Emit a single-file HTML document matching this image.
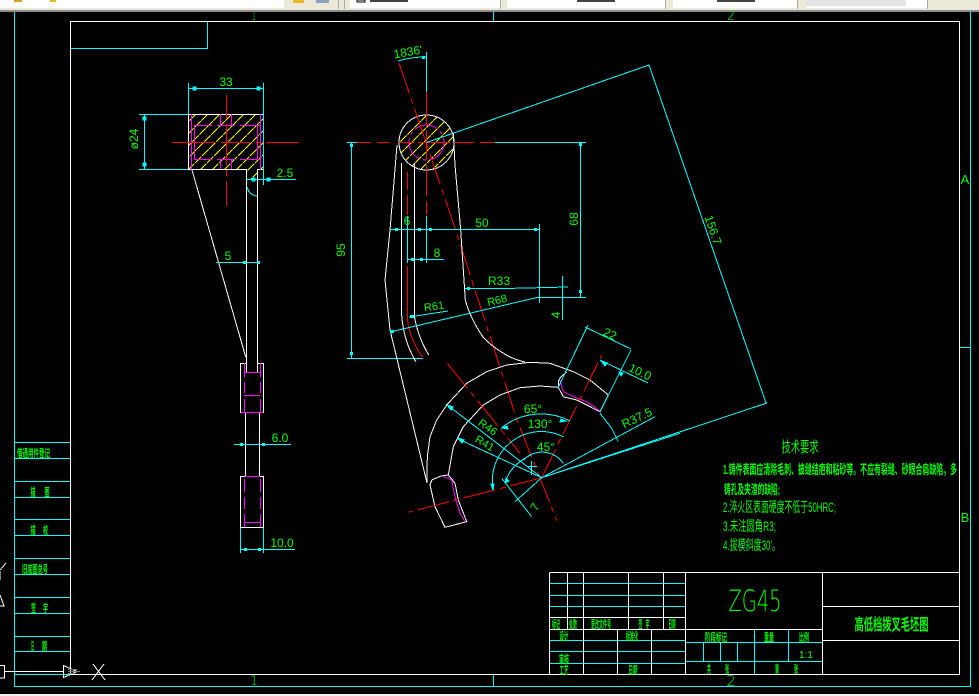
<!DOCTYPE html>
<html><head><meta charset="utf-8"><style>
html,body{margin:0;padding:0;background:#000;width:979px;height:696px;overflow:hidden}
svg{display:block}
.w{stroke:#fff;fill:none}.c{stroke:#0ff;fill:none}.r{stroke:#f00;fill:none}.m{stroke:#f0f;fill:none}
.d{stroke-dasharray:32 5 6 5}
text{fill:#0f0;font-family:"Liberation Sans","WenQuanYi Zen Hei","Noto Sans CJK SC",sans-serif;text-anchor:middle}
.k{font-size:11px;font-weight:bold;font-family:"Liberation Sans","Noto Sans CJK SC",sans-serif}
.n{text-anchor:start;font-size:14px;font-family:"Liberation Sans","Noto Sans CJK SC",sans-serif}
.b{font-weight:bold;font-size:13px}
.t{font-family:"DejaVu Sans",sans-serif;font-weight:200}
</style></head><body>
<svg width="979" height="696" viewBox="0 0 979 696" shape-rendering="crispEdges">
<defs>
<clipPath id="cc"><circle cx="426.5" cy="142.5" r="27"/></clipPath>
<clipPath id="cr"><path d="M189 115H263V169H257V196H247V169H189Z"/></clipPath>
</defs>
<rect width="979" height="696" fill="#000"/>
<!-- toolbar -->
<rect width="979" height="10" fill="#ece9d8"/>
<rect y="10" width="979" height="2" fill="#8c8c8c"/>
<rect width="284" height="8" fill="#fff"/>
<rect x="350" width="150" height="8" fill="#fff"/><rect x="507" width="158" height="8" fill="#fff"/><rect x="673" width="124" height="8" fill="#fff"/><rect x="806" width="122" height="8" fill="#fff"/><rect x="806" width="100" height="6" fill="#e4e4e4"/>
<path d="M338.5 0V9M344.5 0V9M500.5 0V9M665.5 0V9M797.5 0V9M927.5 0V9" stroke="#aaa"/>
<rect x="293" width="11" height="3" fill="#e8b820"/><rect x="316" width="13" height="3" fill="#8aa0c0"/>
<rect x="357" width="8" height="2" fill="#fff" stroke="#000"/><rect x="370" y="0" width="38" height="2" fill="#444"/>
<rect x="577" y="0" width="38" height="2" fill="#444"/><rect x="717" y="0" width="38" height="2" fill="#444"/><rect x="14" y="0" width="8" height="2" fill="#d9a520"/><rect x="50" y="0" width="6" height="2" fill="#e8b820"/>
<!-- bottom strip -->
<rect y="694" width="979" height="2" fill="#f0f0f0"/>
<!-- frames -->
<path class="c" d="M14.5 12V686.5H970.5V12M493.5 12V21M493.5 674V686M959 347.5H970"/>
<path class="w" d="M70.5 21.5H959.5V674.5H70.5Z"/>
<path class="c" d="M71 48.5H207.5V22"/>
<text x="254" y="20" font-size="11" textLength="2" lengthAdjust="spacingAndGlyphs">1</text>
<text x="731" y="20" font-size="13" class="t">2</text>
<text x="254" y="685" font-size="13" class="t">1</text>
<text x="731" y="686" font-size="15" class="t">2</text>
<text x="965" y="184" font-size="13">A</text>
<text x="965" y="522" font-size="13">B</text>
<!-- left table -->
<path class="c" d="M14 442.5H70M14 458.5H70M14 481.5H70M14 497.5H70M14 519.5H70M14 535.5H70M14 558.5H70M14 574.5H70M14 597.5H70M14 613.5H70M14 636.5H70M14 651.5H70M14 674.5H70"/>
<text x="33.5" y="457" textLength="33" lengthAdjust="spacingAndGlyphs" class="k">借通用件登记</text>
<text x="33" y="496" textLength="5" lengthAdjust="spacingAndGlyphs" class="k">描</text><text x="47" y="496" textLength="5" lengthAdjust="spacingAndGlyphs" class="k">图</text>
<text x="33" y="534" textLength="5" lengthAdjust="spacingAndGlyphs" class="k">描</text><text x="45.5" y="534" textLength="5" lengthAdjust="spacingAndGlyphs" class="k">校</text>
<text x="35" y="573" textLength="26" lengthAdjust="spacingAndGlyphs" class="k">旧底图总号</text>
<text x="33.5" y="612" textLength="5" lengthAdjust="spacingAndGlyphs" class="k">签</text><text x="45.5" y="612" textLength="5" lengthAdjust="spacingAndGlyphs" class="k">字</text>
<text x="32.5" y="650" textLength="3" lengthAdjust="spacingAndGlyphs" class="k">日</text><text x="44.5" y="650" textLength="5" lengthAdjust="spacingAndGlyphs" class="k">期</text>
<!-- left stub / UCS -->
<path class="w" d="M0 665.5H4.5V678H0M5 671.5H63M63.5 665.5V677.5L77 671.5Z"/>
<path class="w" d="M70 674.5H120M93 664L105 680M104 664L92 680M0 570L6 563M0 580V571M0 595L4 606H0"/>
<path d="M68 671.5H80M68 669.5H77M68 673.5H75" stroke="#777"/>
<!-- left view section -->
<g clip-path="url(#cr)"><path stroke="#ff0" stroke-dasharray="9 1" fill="none" d="M210 100L130 180M222 100L142 180M234 100L154 180M246 100L166 180M258 100L178 180M270 100L190 180M282 100L202 180M294 100L214 180M306 100L226 180M318 100L238 180M330 100L250 180M342 100L262 180M354 100L258 196"/></g>
<path class="w" d="M188.5 114.5H263.5V169.5H257.5V372M188.5 114.5V169.5H246.5V372"/>
<path class="w" d="M192 170L245.7 357"/>
<path class="m" d="M191.5 114V170M194.5 125V160M260.5 114V170M257.5 125V160M194 125.5H212M217 125.5H235M240 125.5H260M194 159.5H212M217 159.5H235M240 159.5H260M220.5 114V125M231.5 114V125M220.5 160V169M231.5 160V169"/>
<path class="r" d="M172 142.5H214M209 142.5H216M221 142.5H250M256 142.5H263M266 142.5H299M226.5 95V119M226.5 124V165M226.5 170V176M226.5 181V206"/>
<path class="c" d="M188.5 83V114M263.5 83V185M188 88.5H264M139 114.5H188M139 169.5H188M144.5 115V169M246 179.5H296M247 187Q249 195 257 196"/>
<path d="M193 87h3v3h-3zM257 87h3v3h-3zM143 117h3v3h-3zM143 163h3v3h-3zM252 178h3v3h-3zM267 178h3v3h-3z" fill="#0ff" stroke="#0ff"/>
<text x="226" y="86" font-size="12">33</text>
<text x="142" y="143" font-size="12" transform="rotate(-90 138 143)">ø24</text>
<text x="285" y="177" font-size="12">2.5</text>
<path class="c" d="M216 262.5H258"/><path d="M243 261h3v3h-3zM257 261h3v3h-3z" fill="#0ff"/>
<text x="228" y="260" font-size="12">5</text>
<!-- lower shaft -->
<path class="w" d="M246.5 363.5H240.5V412.5H263.5V363.5H257.5M245.5 412V476M259.5 412V476M240.5 476.5H263.5V527.5H240.5Z"/>
<path class="m" d="M244.5 363V377M244.5 382V393M244.5 399V412M260.5 363V377M260.5 382V393M260.5 399V412M244 372.5H260M244 395.5H260M241 412.5H263M245 476.5H260M244.5 479V492M244.5 497V509M244.5 514V527M260.5 479V492M260.5 497V509M260.5 514V527M244 522.5H260"/>
<path class="c" d="M234 444.5H291M240.5 528V553M263.5 528V553M240 549.5H295"/>
<path d="M240 443h3v3h-3zM262 443h3v3h-3zM244 548h3v3h-3zM258 548h3v3h-3z" fill="#0ff"/>
<text x="280" y="442" font-size="12">6.0</text>
<text x="282" y="547" font-size="12">10.0</text>
<!-- circle head -->
<g clip-path="url(#cc)"><path stroke="#ff0" stroke-dasharray="9 1" fill="none" d="M442 100L372 170M454 100L384 170M466 100L396 170M478 100L408 170M490 100L420 170M502 100L432 170M514 100L444 170M526 100L456 170"/></g>
<circle class="w" cx="426.5" cy="142.5" r="27.5"/>
<circle class="m" cx="426.5" cy="142.5" r="17.5" stroke-dasharray="24 4 3 4"/>
<path class="r d" d="M399 63L455 228L517 420L557 521"/>
<path class="r" d="M357 142.5H371M377 142.5H390M399 142.5H414M418 142.5H450M455 142.5H474M480 142.5H495M426.5 92V125M426.5 130V160M426.5 165V196M426.5 201V215"/>
<path class="c" d="M347 142.5H357M495 142.5H586M426.5 52V92M426.5 216V263M351.5 143V358M580.5 143V297M347 358.5H423M537 297.5H586"/>
<path class="c" d="M426.5 142.5L649 65M398 61Q410 57 426 57"/>
<path d="M350 144h3v3h-3zM350 352h3v3h-3zM579 290h3v3h-3zM579 143h3v3h-3zM422 56h3v3h-3z" fill="#0ff"/>
<text x="408" y="56" font-size="12" transform="rotate(-10 408 52)">1836'</text>
<!-- fork -->
<path class="w" d="M397 145L390 230L385 280L390 330L427 483M401.5 163V313Q403 340 416 362M414.5 163V317Q418 337 428.7 355"/>
<path class="w" d="M453.3 133L455 165L460.7 230L465.3 300Q470 318 483 337Q490 345 503 353Q512 359 525 362"/>
<path class="w" d="M427.3 456.7L430 436.7L436.7 420L446.7 405L466.7 383.3L486.7 371.7L506.7 365L530 362.3L550 363.3L573.3 371.7L590 380L608.3 395L600 411.7L576.7 400L563.3 396.7L558.3 387.3L558.3 381.7L560 378L566.7 371.7"/>
<path class="w" d="M427.3 456.7L427 483M448.3 475L453.3 446.7L463.3 426.7L483.3 405L500 395L520 387.7L540 386L558.3 387.3"/>
<path class="w" d="M430 485L431.7 480L441.7 475.7L448.3 475L455 483.3L458.3 500L466.7 521.7L445 527.3L435 506.7Z"/>
<path class="m" d="M560 380L563.3 391.7L573.3 396.7L586.7 401.7L600 411M441.7 475.7L451.7 480L455 496.7L460 513.3L465 521.7"/>
<!-- red lines -->
<path class="r d" d="M541.7 477.7L408.3 512.3M541.7 477.7L601.7 355M447.3 363.3L520 453.3"/>
<path class="r" d="M407.5 172V190M407.5 195V215M407.5 266V320Q410 340 422.7 357"/>
<!-- main dims -->
<path class="c" d="M390 229.5H539M539.5 224V303M407.5 216V263M407 259.5H444M465 288.5H505L568 287M562.5 276V320M390 332L537 297.5M409 317L448 311M448.3 405.7L541.7 477.7M458.3 439L541.7 477.7M655 416.7L541.7 477.7M680 433.3L541.7 477.7M541.7 477.7L767 403M649 65L766 403"/>
<path d="M395 228h3v3h-3zM418 228h3v3h-3zM429 228h3v3h-3zM534 228h3v3h-3zM411 258h3v3h-3zM420 258h3v3h-3zM467 287h3v3h-3zM410 315h4v3h-4zM390 330h4v3h-4z" fill="#0ff"/>
<path class="c" d="M501.7 427.7A63 63 0 0 1 570 421M493.3 490A49 49 0 0 1 563.3 436.7M523.3 460A26 26 0 0 1 563.3 463.3M505 483Q510 465 531 455M515 501.7L541.7 477.7M501.7 478.3L531.7 516.7M527 466.5H537M531.5 461V475M600 413.3L611.7 428.3L618.3 441.7"/>
<path class="c" d="M558 388L588 325M600 412L631 350M585 327L631 349M600 360L648 383"/>
<path d="M601 361l6 2-2 3zM619 372l4 1-2 3zM447 405l6 2-2 3zM458 438l6 2-2 3zM502 428l5-2 1 3zM566 421l-5-2-1 3zM493 490l-2-6 3 0zM505 483l1-5 3 3z" fill="#0ff" stroke="#0ff"/>
<text x="482" y="227" font-size="12">50</text>
<text x="407" y="225" font-size="12">6</text>
<text x="437" y="257" font-size="12">8</text>
<text x="499" y="285" font-size="12">R33</text>
<text x="434" y="310" font-size="11" transform="rotate(-8 434 306)">R61</text>
<text x="497" y="304" font-size="11" transform="rotate(-13 497 300)">R68</text>
<text x="345" y="250" font-size="12" transform="rotate(-90 345 250)">95</text>
<text x="574" y="223" font-size="12" transform="rotate(-90 574 219)">68</text>
<text x="556" y="319" font-size="12" transform="rotate(-90 556 315)">4</text>
<text x="713" y="234" font-size="12" transform="rotate(71 713 230)">156.7</text>
<text x="610" y="338" font-size="12" transform="rotate(25 610 334)">22</text>
<text x="640" y="376" font-size="12" transform="rotate(25 640 372)">10.0</text>
<text x="637" y="422" font-size="12" transform="rotate(-25 637 418)">R37.5</text>
<text x="533" y="413" font-size="12">65°</text>
<text x="540" y="428" font-size="12">130°</text>
<text x="546" y="451" font-size="12">45°</text>
<text x="488" y="431" font-size="11" transform="rotate(35 488 427)">R46</text>
<text x="485" y="447" font-size="11" transform="rotate(30 485 443)">R41</text>
<text x="535" y="511" font-size="12" transform="rotate(-60 535 507)">7</text>
<!-- notes -->
<text x="800" y="452" font-size="15" textLength="37" lengthAdjust="spacingAndGlyphs">技术要求</text>
<text class="n b" x="723" y="474" textLength="234" lengthAdjust="spacingAndGlyphs">1.铸件表面应清除毛刺、披缝结疤和粘砂等。不应有裂缝、砂眼合肩缺陷，多</text>
<text class="n b" x="724" y="494" textLength="56" lengthAdjust="spacingAndGlyphs">铸孔及夹渣的缺陷;</text>
<text class="n" x="723" y="512" textLength="113" lengthAdjust="spacingAndGlyphs">2.淬火区表面硬度不低于50HRC;</text>
<text class="n" x="723" y="531" textLength="53" lengthAdjust="spacingAndGlyphs">3.未注圆角R3;</text>
<text class="n" x="723" y="550" textLength="57" lengthAdjust="spacingAndGlyphs">4.拔模斜度30'。</text>
<!-- title block -->
<path class="c" d="M550 583.5H685M550 595.5H685M550 606.5H685M550 640.5H685M550 651.5H685M550 663.5H685M686 642.5H822M686 661.5H822M754.5 630V674M788.5 630V661M703.5 643V661M720.5 643V661M737.5 643V661"/>
<path class="w" d="M549.5 572.5H959M549.5 572.5V674M685.5 572.5V674M822.5 572.5V674M822 606.5H959M822 640.5H959M549 629.5H822M549 617.5H685M567.5 572V629M583.5 572V674M628.5 572V629M663.5 572V629M617.5 629V674M651.5 629V674"/>
<text x="755" y="611" font-size="29" class="t" textLength="53" lengthAdjust="spacingAndGlyphs">ZG45</text>
<text x="891.5" y="630" font-size="16" font-weight="bold" textLength="74" lengthAdjust="spacingAndGlyphs">高低档拨叉毛坯图</text>
<text class="k" x="556" y="628" textLength="8" lengthAdjust="spacingAndGlyphs">标记</text>
<text class="k" x="573" y="628" textLength="8" lengthAdjust="spacingAndGlyphs">处数</text>
<text class="k" x="601" y="628" textLength="20" lengthAdjust="spacingAndGlyphs">更改文件号</text>
<text class="k" x="640.5" y="628" textLength="4" lengthAdjust="spacingAndGlyphs">签</text><text class="k" x="647.5" y="628" textLength="4" lengthAdjust="spacingAndGlyphs">字</text>
<text class="k" x="672" y="628" textLength="7" lengthAdjust="spacingAndGlyphs">日期</text>
<text class="k" x="564" y="640" textLength="9" lengthAdjust="spacingAndGlyphs">设计</text>
<text class="k" x="632" y="640" textLength="12" lengthAdjust="spacingAndGlyphs">标准化</text>
<text class="k" x="564" y="663" textLength="10" lengthAdjust="spacingAndGlyphs">审核</text>
<text class="k" x="564" y="674" textLength="9" lengthAdjust="spacingAndGlyphs" font-size="10">工艺</text>
<text class="k" x="633" y="674" textLength="9" lengthAdjust="spacingAndGlyphs" font-size="10">日期</text>
<text class="k" x="716" y="641" textLength="22" lengthAdjust="spacingAndGlyphs">阶段标记</text>
<text class="k" x="769" y="641" textLength="10" lengthAdjust="spacingAndGlyphs">重量</text>
<text class="k" x="804" y="641" textLength="10" lengthAdjust="spacingAndGlyphs">比例</text>
<text x="806" y="658" font-size="10">1:1</text>
<text class="k" x="709" y="673" textLength="4" lengthAdjust="spacingAndGlyphs">共</text><text class="k" x="727" y="673" textLength="4" lengthAdjust="spacingAndGlyphs">张</text>
<text class="k" x="777" y="673" textLength="4" lengthAdjust="spacingAndGlyphs">第</text><text class="k" x="796" y="673" textLength="4" lengthAdjust="spacingAndGlyphs">张</text>
</svg>
</body></html>
